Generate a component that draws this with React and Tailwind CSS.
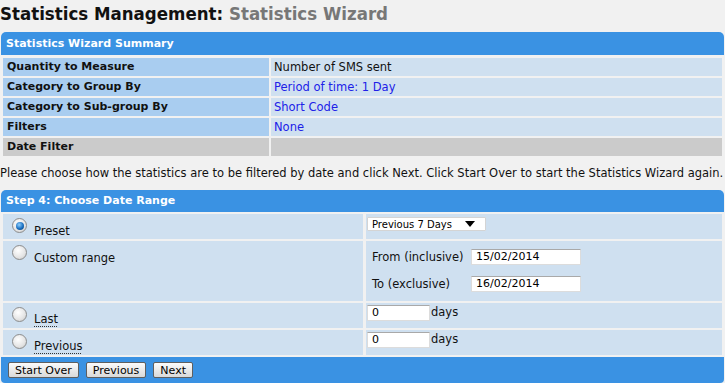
import React from "react";

const summaryRows = [
  { label: "Quantity to Measure", value: "Number of SMS sent", link: false },
  { label: "Category to Group By", value: "Period of time: 1 Day", link: true },
  { label: "Category to Sub-group By", value: "Short Code", link: true },
  { label: "Filters", value: "None", link: true },
];

const Radio = ({ checked }) => (
  <span className="mt-[4px] ml-[9px] flex h-[15px] w-[15px] shrink-0 items-center justify-center rounded-full border border-[#8c8c8c] bg-[radial-gradient(circle_at_40%_35%,#ffffff,#e4e4e4_60%,#c4c4c4)]">
    {checked && (
      <span className="h-[8px] w-[8px] rounded-full bg-[radial-gradient(circle_at_40%_35%,#8fd0ff,#1a6fc0_55%,#063a70)]" />
    )}
  </span>
);

const Button = ({ children }) => (
  <button className="h-[16px] rounded-[2px] border border-[#5f5f5f] bg-gradient-to-b from-[#fbfbfb] to-[#d9d9d9] px-[6px] text-[11px] leading-[13px] text-black">
    {children}
  </button>
);

const TextInput = ({ value, w }) => (
  <span
    className={`${w} flex h-[16px] items-center border border-[#dcdcdc] border-t-[#a9a9a9] bg-white pl-[4px] text-[11px] text-black`}
  >
    {value}
  </span>
);

export default function App() {
  return (
    <div className="min-h-screen bg-[#f1f1f1] font-['DejaVu_Sans',sans-serif] text-[11.5px] text-[#111]">
      <h1 className="h-[32px] pt-[2px] font-['DejaVu_Sans_Condensed','DejaVu_Sans',sans-serif] text-[18.5px] font-bold leading-[24px] text-[#111]">
        Statistics Management: <span className="text-[#777]">Statistics Wizard</span>
      </h1>

      {/* summary */}
      <div className="mx-[1px]">
        <div className="h-[23px] rounded-t-[5px] bg-[#3a92e3] pl-[5px] text-[11px] font-bold leading-[23px] text-white">
          Statistics Wizard Summary
        </div>
        <div className="grid grid-cols-[266px_1fr] gap-[2px] p-[2px] pt-[3px]">
          {summaryRows.map((r) => (
            <React.Fragment key={r.label}>
              <div className="h-[18px] bg-[#a9cdf0] pl-[4px] text-[11px] font-bold leading-[18px]">{r.label}</div>
              <div
                className={`h-[18px] bg-[#cfe0f0] pl-[3px] leading-[18px] ${r.link ? "text-[#2020e8]" : ""}`}
              >
                {r.value}
              </div>
            </React.Fragment>
          ))}
          <div className="h-[18px] bg-[#cbcbcb] pl-[4px] text-[11px] font-bold leading-[18px]">Date Filter</div>
          <div className="h-[18px] bg-[#cbcbcb]" />
        </div>
      </div>

      <p className="mt-[8px] h-[14px] whitespace-nowrap leading-[14px]">
        Please choose how the statistics are to be filtered by date and click Next. Click Start Over to start the Statistics Wizard again.
      </p>

      {/* step 4 */}
      <div className="mx-[1px] mt-[10px]">
        <div className="h-[22px] rounded-t-[5px] bg-[#3a92e3] pl-[5px] text-[11px] font-bold leading-[22px] text-white">
          Step 4: Choose Date Range
        </div>
        <div className="grid grid-cols-[360px_1fr] gap-x-[3px] gap-y-[2px] p-[2px]">
          {/* preset */}
          <div className="flex h-[25px] bg-[#cfe0f0]">
            <Radio checked />
            <span className="ml-[7px] mt-[11px] leading-[13px]">Preset</span>
          </div>
          <div className="h-[25px] bg-[#cfe0f0] pl-[1px] pt-[3px]">
            <div className="flex h-[14px] w-[119px] items-center justify-between rounded-[1px] border border-[#d4d4d4] bg-white pl-[4px] pr-[10px] text-[10px] text-black">
              <span>Previous 7 Days</span>
              <svg width="10" height="6" viewBox="0 0 10 6">
                <path d="M0 0h10L5 6z" fill="#000" />
              </svg>
            </div>
          </div>

          {/* custom */}
          <div className="flex h-[60px] bg-[#cfe0f0]">
            <Radio />
            <span className="ml-[7px] mt-[11px] h-[13px] leading-[13px]">Custom range</span>
          </div>
          <div className="h-[60px] bg-[#cfe0f0] pl-[6px] pt-[8px]">
            <div className="grid grid-cols-[99px_110px] gap-y-[11px]">
              <span className="leading-[16px]">From (inclusive)</span>
              <TextInput value="15/02/2014" w="w-[110px]" />
              <span className="leading-[16px]">To (exclusive)</span>
              <TextInput value="16/02/2014" w="w-[110px]" />
            </div>
          </div>

          {/* last */}
          <div className="flex h-[25px] bg-[#cfe0f0]">
            <Radio />
            <span className="ml-[7px] mt-[10px] h-[14px] leading-[13px] underline decoration-dotted decoration-[#333] underline-offset-[3px]">
              Last
            </span>
          </div>
          <div className="flex h-[25px] items-start bg-[#cfe0f0] pl-[1px] pt-[2px]">
            <TextInput value="0" w="w-[63px]" />
            <span className="ml-[1px] leading-[14px]">days</span>
          </div>

          {/* previous */}
          <div className="flex h-[25px] bg-[#cfe0f0]">
            <Radio />
            <span className="ml-[7px] mt-[10px] h-[14px] leading-[13px] underline decoration-dotted decoration-[#333] underline-offset-[3px]">
              Previous
            </span>
          </div>
          <div className="flex h-[25px] items-start bg-[#cfe0f0] pl-[1px] pt-[2px]">
            <TextInput value="0" w="w-[63px]" />
            <span className="ml-[1px] leading-[14px]">days</span>
          </div>
        </div>
        <div className="flex h-[26px] gap-[7px] rounded-b-[4px] bg-[#3a92e3] pl-[7px] pt-[5px]">
          <Button>Start Over</Button>
          <Button>Previous</Button>
          <Button>Next</Button>
        </div>
      </div>
    </div>
  );
}
